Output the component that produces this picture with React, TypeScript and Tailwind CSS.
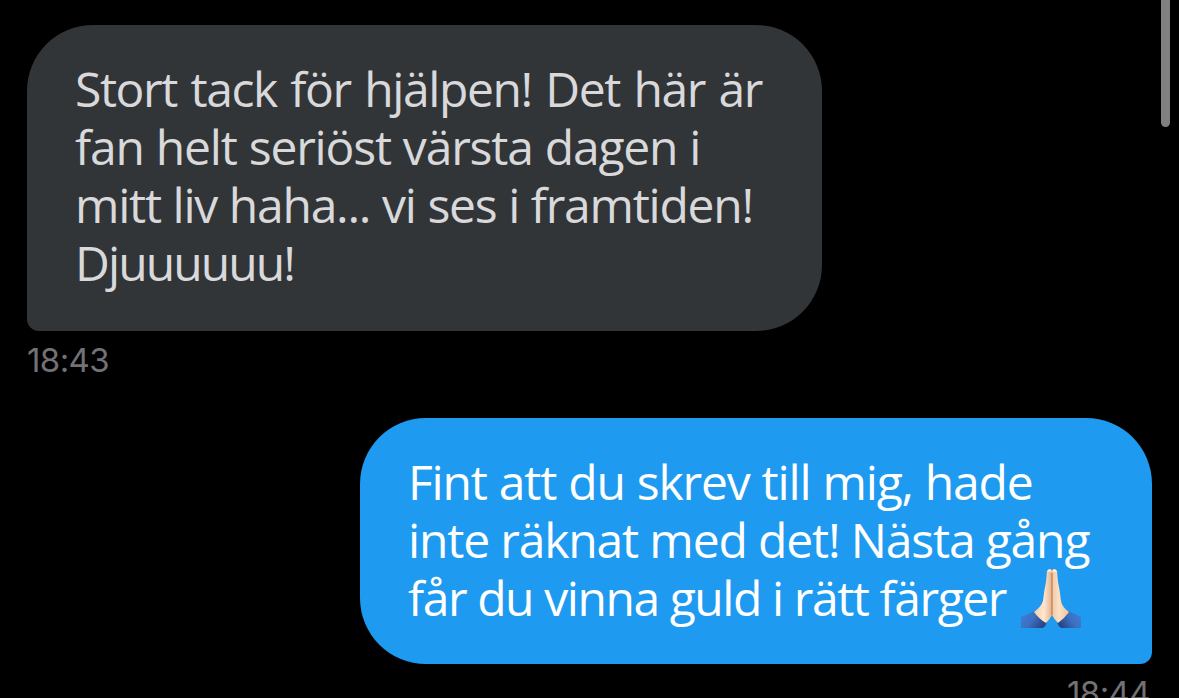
import React from 'react';

interface Line {
  text: string;
  tracking: string;
  hands?: boolean;
}

interface Message {
  id: number;
  time: string;
  own: boolean;
  lines: Line[];
}

const messages: Message[] = [
  {
    id: 1,
    time: '18:43',
    own: false,
    lines: [
      { text: 'Stort tack för hjälpen! Det här är', tracking: 'tracking-[-1.42px] [word-spacing:2.5px]' },
      { text: 'fan helt seriöst värsta dagen i', tracking: 'tracking-[-1.19px] [word-spacing:0.8px]' },
      { text: 'mitt liv haha... vi ses i framtiden!', tracking: 'tracking-[-1.25px] [word-spacing:0.6px]' },
      { text: 'Djuuuuuu!', tracking: 'tracking-[-1.9px]' },
    ],
  },
  {
    id: 2,
    time: '18:44',
    own: true,
    lines: [
      { text: 'Fint att du skrev till mig, hade', tracking: 'tracking-[-1.18px] [word-spacing:0.8px]' },
      { text: 'inte räknat med det! Nästa gång', tracking: 'tracking-[-1.16px]' },
      { text: 'får du vinna guld i rätt färger', tracking: 'tracking-[-1.43px]', hands: true },
    ],
  },
];

const FoldedHands: React.FC = () => (
  <svg viewBox="0 0 60 60" className="ml-[14.5px] w-[60px] h-[60px] shrink-0">
    <defs>
      <linearGradient id="skinLeft" x1="0" x2="1" y1="0" y2="0">
        <stop offset="0" stopColor="#f3cda9" />
        <stop offset="0.55" stopColor="#ffe7cf" />
        <stop offset="1" stopColor="#e3b28b" />
      </linearGradient>
      <linearGradient id="skinRight" x1="0" x2="1" y1="0" y2="0">
        <stop offset="0" stopColor="#f0c8a4" />
        <stop offset="0.4" stopColor="#fde0c5" />
        <stop offset="1" stopColor="#f0c49c" />
      </linearGradient>
      <linearGradient id="sleeveLeft" x1="0" x2="1" y1="0" y2="0.5">
        <stop offset="0" stopColor="#3f7fd6" />
        <stop offset="0.55" stopColor="#3d70c2" />
        <stop offset="1" stopColor="#264789" />
      </linearGradient>
      <linearGradient id="sleeveRight" x1="1" x2="0" y1="0" y2="0.5">
        <stop offset="0" stopColor="#3f7fd6" />
        <stop offset="0.55" stopColor="#3d70c2" />
        <stop offset="1" stopColor="#264789" />
      </linearGradient>
    </defs>
    <path d="M0 48 Q8 45 15 41 Q18 48 26 53 Q25 57 22 59 H0Z" fill="url(#sleeveLeft)" />
    <path d="M60 48 Q53 45 46 41 Q43 48 36 53 Q37 57 40 59 H60Z" fill="url(#sleeveRight)" />
    <path d="M26 2 Q27 0 29 0 Q31 0 31 3 V46 Q29 50 25 54 Q18 50 13 43 Q20 38 22 32 Q23 22 25 13Z" fill="url(#skinLeft)" />
    <path d="M36 2 Q35 0 33 0 Q31 0 31 3 V46 Q33 50 37 54 Q43 50 48 43 Q41 38 40 32 Q39 22 37 13Z" fill="url(#skinRight)" />
    <path d="M31 4 V46" stroke="#a8693f" strokeWidth="0.9" />
    <path d="M27 2.5 Q28.5 0 30 2.5M32 2.5 Q33.5 0 35 2.5" stroke="#fff7ef" strokeWidth="1.5" fill="none" />
  </svg>
);

const Bubble: React.FC<{ message: Message }> = ({ message }) => (
  <div
    className={
      message.own
        ? 'w-[792px] h-[246px] pt-[35px] pl-[48px] rounded-[66px] rounded-br-[12px] bg-[#1e9bf0] text-white'
        : 'w-[795px] h-[306px] pt-[35px] pl-[48px] rounded-[66px] rounded-bl-[12px] bg-[#323538] text-[#d9d9db]'
    }
  >
    {message.lines.map((line) => (
      <div key={line.text} className="flex h-[58px] whitespace-nowrap">
        <span className={line.tracking}>{line.text}</span>
        {line.hands && <FoldedHands />}
      </div>
    ))}
  </div>
);

const App: React.FC = () => {
  return (
    <div className="relative w-full h-[698px] overflow-hidden bg-black font-['Open_Sans',sans-serif] text-[48px] leading-[58px]">
      <div className="flex flex-col gap-[40px] pt-[25px] pl-[27px] pr-[27px]">
        {messages.map((message) => (
          <div key={message.id} className={`flex flex-col ${message.own ? 'items-end' : 'items-start'}`}>
            <Bubble message={message} />
            <time className="mt-[7px] mr-[2px] h-[40px] font-['Inter',sans-serif] text-[33px] leading-[44px] tracking-[-0.6px] text-[#717176]">
              {message.time}
            </time>
          </div>
        ))}
      </div>
      {/* scroll indicator */}
      <div className="absolute right-[9px] top-0 w-[9px] h-[127px] rounded-b-full bg-[#808080]" />
    </div>
  );
};

export default App;
